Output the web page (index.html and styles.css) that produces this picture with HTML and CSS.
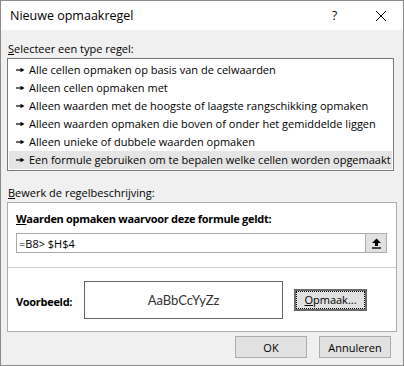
FILE: index.html
```html
<!DOCTYPE html>
<html lang="nl">
<head>
  <meta charset="UTF-8">
  <title>Nieuwe opmaakregel</title>
  <link rel="stylesheet" href="styles.css">
</head>
<body>
  <div class="dialog">
    <div class="titlebar">
      <span class="title">Nieuwe opmaakregel</span>
      <span class="help">?</span>
      <span class="close">
        <svg width="12" height="12" viewBox="0 0 12 12"><path d="M1 1 L11 11 M11 1 L1 11" stroke="#000" stroke-width="1"/></svg>
      </span>
    </div>

    <div class="body">
      <div class="label"><u>S</u>electeer een type regel:</div>
      <ul class="rule-list">
        <li><svg class="arrow" width="9" height="6" viewBox="0 0 9 6"><path d="M0 3 H5" stroke="#000" stroke-width="1.2"/><path d="M4.5 0.8 L8.5 3 L4.5 5.2 Z" fill="#000"/></svg>Alle cellen opmaken op basis van de celwaarden</li>
        <li><svg class="arrow" width="9" height="6" viewBox="0 0 9 6"><path d="M0 3 H5" stroke="#000" stroke-width="1.2"/><path d="M4.5 0.8 L8.5 3 L4.5 5.2 Z" fill="#000"/></svg>Alleen cellen opmaken met</li>
        <li><svg class="arrow" width="9" height="6" viewBox="0 0 9 6"><path d="M0 3 H5" stroke="#000" stroke-width="1.2"/><path d="M4.5 0.8 L8.5 3 L4.5 5.2 Z" fill="#000"/></svg>Alleen waarden met de hoogste of laagste rangschikking opmaken</li>
        <li><svg class="arrow" width="9" height="6" viewBox="0 0 9 6"><path d="M0 3 H5" stroke="#000" stroke-width="1.2"/><path d="M4.5 0.8 L8.5 3 L4.5 5.2 Z" fill="#000"/></svg>Alleen waarden opmaken die boven of onder het gemiddelde liggen</li>
        <li><svg class="arrow" width="9" height="6" viewBox="0 0 9 6"><path d="M0 3 H5" stroke="#000" stroke-width="1.2"/><path d="M4.5 0.8 L8.5 3 L4.5 5.2 Z" fill="#000"/></svg>Alleen unieke of dubbele waarden opmaken</li>
        <li class="selected"><svg class="arrow" width="9" height="6" viewBox="0 0 9 6"><path d="M0 3 H5" stroke="#000" stroke-width="1.2"/><path d="M4.5 0.8 L8.5 3 L4.5 5.2 Z" fill="#000"/></svg>Een formule gebruiken om te bepalen welke cellen worden opgemaakt</li>
      </ul>

      <div class="label label-edit"><u>B</u>ewerk de regelbeschrijving:</div>
      <div class="desc">
        <div class="desc-top">
          <div class="desc-title"><u>W</u>aarden opmaken waarvoor deze formule geldt:</div>
          <div class="formula">
            <span class="formula-text">=B8&gt; $H$4</span>
            <span class="collapse">
              <svg width="11" height="11" viewBox="0 0 11 11"><path d="M5.5 0.5 L10 5 H7 V8 H4 V5 H1 Z" fill="#000"/><path d="M1 10 H10" stroke="#000" stroke-width="1.4"/></svg>
            </span>
          </div>
        </div>
        <div class="desc-bottom">
          <span class="preview-label">Voorbeeld:</span>
          <div class="preview">AaBbCcYyZz</div>
          <span class="btn btn-default"><span class="focus"><u>O</u>pmaak...</span></span>
        </div>
      </div>

      <div class="actions">
        <span class="btn">OK</span>
        <span class="btn">Annuleren</span>
      </div>
    </div>
  </div>
</body>
</html>
```

FILE: styles.css
```css
body {
  margin: 0;
  padding: 0;
  font-family: "Open Sans", "Noto Sans", sans-serif;
  font-size: 11px;
  color: #000;
}
.dialog {
  width: 404px;
  height: 366px;
  box-sizing: border-box;
  border: 1px solid #8a8a8a;
  background: #f0f0f0;
  display: flex;
  flex-direction: column;
}
.titlebar {
  height: 29px;
  background: #fff;
  display: flex;
  align-items: center;
  padding-left: 9px;
}
.title {
  font-size: 12.5px;
  flex: 1;
}
.help {
  font-size: 12px;
  width: 43px;
  text-align: left;
}
.close {
  width: 28px;
  display: flex;
}
.body {
  padding: 0 6px 0 6px;
  flex: 1;
}
.label {
  margin-top: 11px;
  height: 16px;
  line-height: 16px;
  padding-left: 1px;
}
.rule-list {
  list-style: none;
  margin: 1px 0 0 0;
  padding: 2px 1px 1px 1px;
  border: 1px solid #7a7a7a;
  background: #fff;
  width: 387px;
  box-sizing: border-box;
}
.rule-list li {
  height: 18px;
  line-height: 18px;
  display: flex;
  align-items: center;
  white-space: nowrap;
}
.rule-list li.selected {
  background: #e5e5e5;
}
.arrow {
  margin: 0 4px 0 7px;
}
.label-edit {
  margin-top: 14px;
}
.desc {
  margin-top: 1px;
  width: 390px;
  box-sizing: border-box;
  border: 1px solid #adadad;
  background: #fff;
}
.desc-top {
  height: 65px;
  border-bottom: 1px solid #d0d0d0;
  padding: 8px 9px 0 8px;
  box-sizing: border-box;
}
.desc-title {
  font-weight: bold;
  letter-spacing: -0.3px;
  height: 16px;
  line-height: 16px;
}
.formula {
  margin-top: 6px;
  height: 20px;
  border: 1px solid #a8a8a8;
  box-sizing: border-box;
  display: flex;
  align-items: center;
}
.formula-text {
  flex: 1;
  padding-left: 2px;
}
.collapse {
  width: 22px;
  height: 20px;
  margin: -1px -1px -1px 0;
  box-sizing: border-box;
  border: 1px solid #adadad;
  background: #e1e1e1;
  display: flex;
  align-items: center;
  justify-content: center;
}
.desc-bottom {
  height: 63px;
  display: flex;
  align-items: center;
  padding: 0 8px;
}
.preview-label {
  font-weight: bold;
  letter-spacing: -0.3px;
  width: 68px;
  margin-top: 4px;
}
.preview {
  width: 199px;
  height: 38px;
  box-sizing: border-box;
  border: 1px solid #646464;
  display: flex;
  align-items: center;
  justify-content: center;
  font-family: "Lato", sans-serif;
  font-size: 13px;
  color: #333;
}
.btn {
  width: 72px;
  height: 22px;
  box-sizing: border-box;
  border: 1px solid #adadad;
  background: #e1e1e1;
  display: inline-flex;
  align-items: center;
  justify-content: center;
}
.btn-default {
  margin-left: 11px;
  width: 73px;
  border: 2px solid #6b6b6b;
}
.focus {
  border: 1px dotted #000;
  padding: 1px 3px;
  height: 14px;
  line-height: 14px;
  width: 63px;
  text-align: center;
}
.actions {
  display: flex;
  justify-content: flex-end;
  gap: 12px;
  margin-top: 4px;
  padding-right: 6px;
}
```
